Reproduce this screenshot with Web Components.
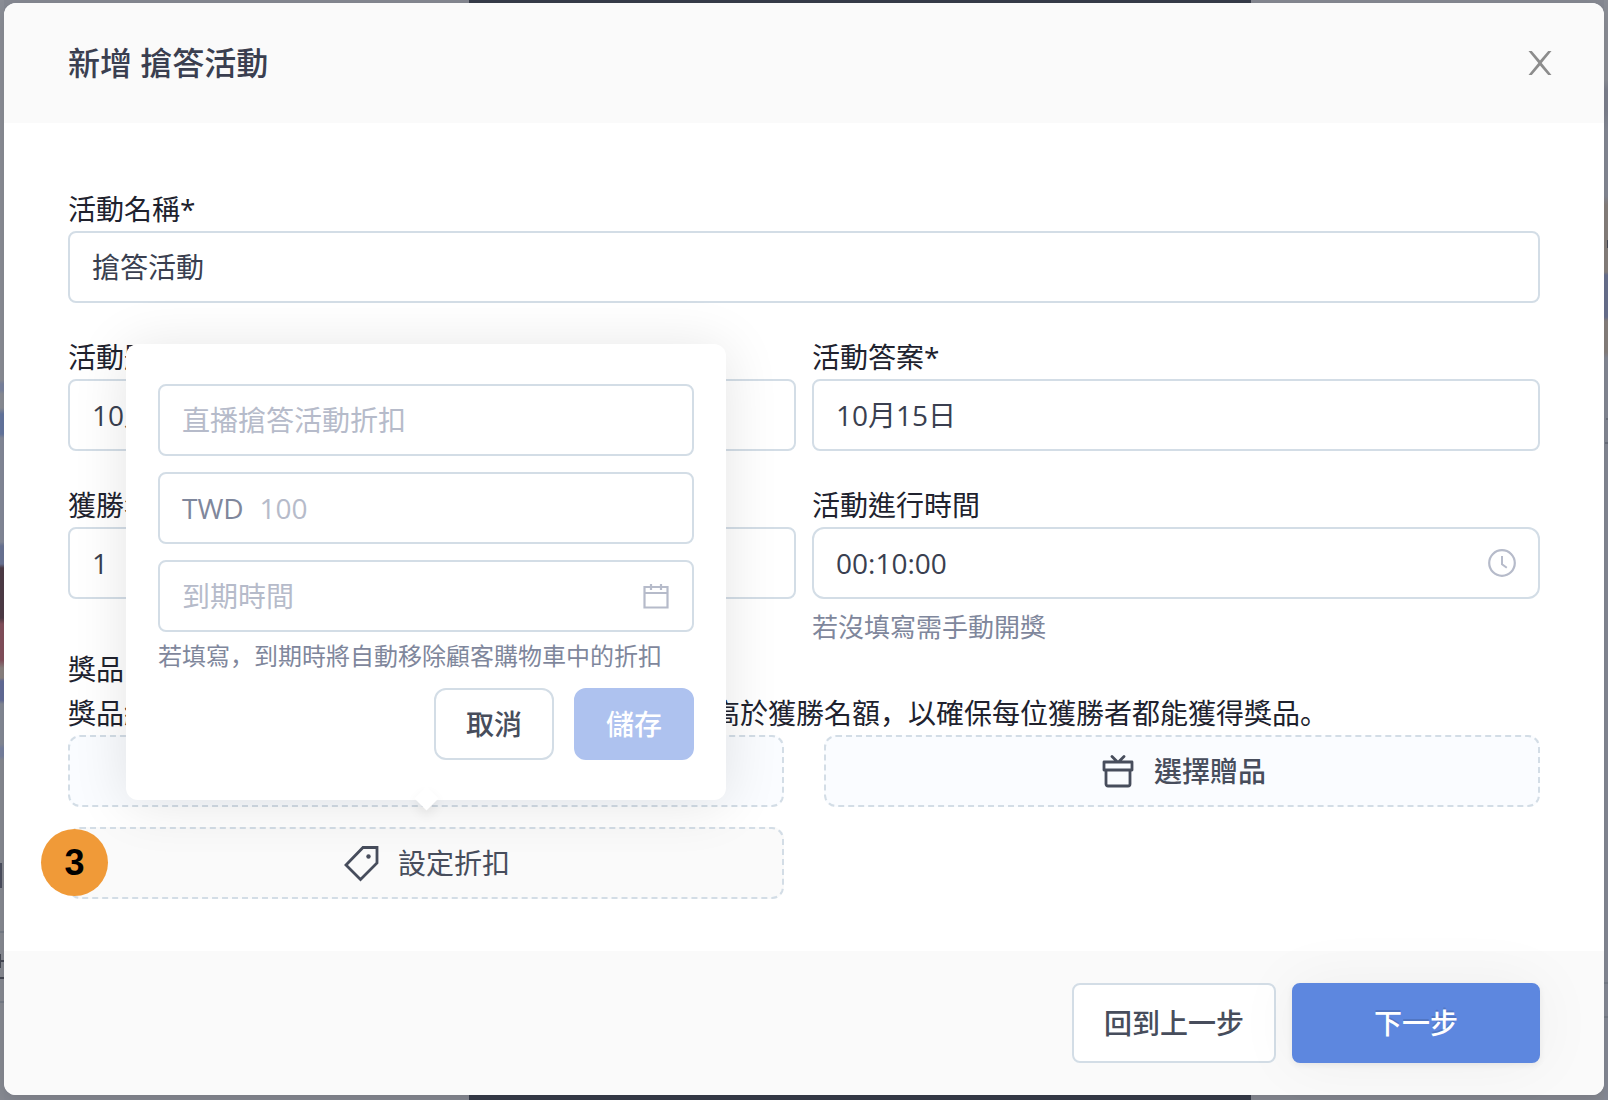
<!DOCTYPE html>
<html lang="zh-Hant">
<head>
<meta charset="utf-8">
<meta name="viewport" content="width=device-width, initial-scale=1">
<title>新增 搶答活動</title>
<style>
  body {
    margin: 0;
    font: 28px/44px "Open Sans", "Noto Sans CJK TC", sans-serif;
    color: #20222e;
    --line: #d3dde6;
    --text: #3a3f50;
    --muted: #7f879c;
    --faint: #b6bbca;
    --primary: #5d87df;
  }
  .comma { font-family: "Noto Sans CJK SC", sans-serif; line-height: 0; }
  .wide { grid-column: 1 / -1; }
</style>
</head>
<body>
<page-backdrop>
  <activity-dialog heading="新增 搶答活動">
    <field-grid>
      <form-field class="wide" label="活動名稱*" value="搶答活動"></form-field>
      <form-field label="活動題目*" value="10月15日"></form-field>
      <form-field label="活動答案*" value="10月15日"></form-field>
      <form-field label="獲勝名額*" value="1"></form-field>
      <form-field label="活動進行時間" value="00:10:00" icon="clock" round hint="若沒填寫需手動開獎"></form-field>
    </field-grid>
    <prize-section>
      <span slot="label">獎品</span>
      <span slot="note">獎品總數量為所有商品、贈品與折扣的合計<span class="comma" lang="zh-Hans">，</span>建議須高於獲勝名額<span class="comma" lang="zh-Hans">，</span>以確保每位獲勝者都能獲得獎品<span class="comma" lang="zh-Hans">。</span></span>
      <dashed-button icon="bag">選擇商品</dashed-button>
      <dashed-button icon="gift">選擇贈品</dashed-button>
      <dashed-button icon="tag" active>設定折扣
        <step-badge slot="badge">3</step-badge>
        <discount-popover slot="popover"><span>若填寫<span class="comma" lang="zh-Hans">，</span>到期時將自動移除顧客購物車中的折扣</span></discount-popover>
      </dashed-button>
    </prize-section>
    <app-button slot="footer" size="large">回到上一步</app-button>
    <app-button slot="footer" size="large" kind="primary">下一步</app-button>
  </activity-dialog>
</page-backdrop>

<script>
const define = (name, render) => customElements.define(name, class extends HTMLElement {
  connectedCallback() {
    if (this.shadowRoot) return;
    const t = document.createElement('template');
    t.innerHTML = '<style>*{box-sizing:border-box}:host{box-sizing:border-box}</style>' + render(this);
    this.attachShadow({ mode: 'open' }).append(t.content.cloneNode(true));
  }
});

const icons = {
  close: [24, '<path d="M.5 0h3.300L12 9.400 20.200 0h3.300L13.700 12 23.500 24h-3.300L12 14.400 3.800 24H.5L10.300 12z" fill="currentColor"/>'],
  clock: [28, '<circle cx="14" cy="14" r="12.800" stroke-width="2.200"/><path d="M14 7v8.200l4.800 3.600" stroke-width="2"/>'],
  calendar: [28, '<path d="M2.500 5h23v20.500h-23zM2.500 11h23M9 2v6M19 2v6" stroke-width="2.200"/>'],
  gift: [36, '<path d="M6 9h28v8H6zM8 17h24v14a2 2 0 0 1-2 2H10a2 2 0 0 1-2-2zM14 3.500l5.500 5.500h1L26 3.500" stroke-width="2.800" stroke-linejoin="round" stroke-linecap="round"/>'],
  tag: [36, '<path d="M21 2.500h14v15.500L18.500 34.500 4 20z" stroke-width="2.800"/><circle cx="26.500" cy="11.500" r="2.200" fill="currentColor" stroke="none"/>'],
  bag: [36, '<path d="M6 11h24v21H6zM12 15V9a6 6 0 0 1 12 0v6" stroke-width="2.800"/>']
};
define('ui-icon', el => {
  const [s, d] = icons[el.getAttribute('name')];
  return `<style>:host{display:block;flex:none}svg{display:block;overflow:visible}</style>
  <svg width="${s}" height="${s}" viewBox="0 0 ${s} ${s}" fill="none" ${el.getAttribute('name') === 'close' ? '' : 'stroke="currentColor"'} aria-hidden="true">${d}</svg>`;
});

define('page-backdrop', () => `
<style>
  :host {
    display: block; min-height: 100vh; padding: 3px 4px 5px;
    background:
      linear-gradient(#4b4f5f, #4b4f5f) 0 863px / 2px 25px,
      linear-gradient(#454854, #454854) 0 960px / 4px 2px,
      linear-gradient(#454854, #454854) 0 977px / 4px 2px,
      linear-gradient(#454854, #454854) 0 954px / 1px 14px,
      linear-gradient(#777d88, #777d88) 0 931px / 4px 2px,
      linear-gradient(#777d88, #777d88) 0 1001px / 4px 2px,
      linear-gradient(#454854, #454854) right 240px / 1px 8px,
      linear-gradient(#6b707c, #6b707c) right 418px / 2px 2px,
      linear-gradient(#6b707c, #6b707c) right 442px / 3px 2px,
      linear-gradient(#777d88, #777d88) right 982px / 4px 2px,
      linear-gradient(#777d88, #777d88) right 1016px / 4px 2px,
      linear-gradient(#8b8e96 380px, #7b84a0 384px 390px, #8b8e96 394px 408px, #6577a0 414px 434px, #858a9a 438px 542px, #6b7596 546px 564px, #4f3c47 568px 618px, #84505c 624px 660px, #8b8280 668px 678px, #636c98 681px 700px, #858a96 704px 744px, #7882a0 748px 756px, #878a92 760px) left / 4px 100%,
      linear-gradient(#8b8e96 80px, #7d818e 90px 110px, #858995 130px 196px, #87807d 205px 272px, #69718f 275px 317px, #87807d 321px 352px, #858995 358px) right / 4px 100%,
      linear-gradient(90deg, transparent 29.180%, #373c4a 29.180% 77.800%, transparent 77.800%),
      #868992;
    background-repeat: no-repeat;
  }
</style><slot></slot>`);

define('activity-dialog', el => `
<style>
  :host { display: flex; flex-direction: column; background: #fff; border-radius: 12px; box-shadow: 0 4px 16px rgba(0,0,0,.12); }
  header { display: flex; align-items: center; justify-content: space-between; padding: 36px 40px 36px 64px; background: #fafafa; border-radius: 12px 12px 0 0; }
  h1 { margin: 0; font-size: 32px; line-height: 48px; font-weight: 500; color: #3a3f50; }
  header button { display: grid; place-items: center; width: 48px; height: 48px; padding: 0; border: 0; background: none; color: #8c8c8c; }
  main { padding: 64px 64px 52px; }
  footer { display: flex; justify-content: flex-end; gap: 16px; padding: 32px 64px; background: #fafafa; border-radius: 0 0 12px 12px; }
</style>
<header><h1>${el.getAttribute('heading')}</h1><button type="button" aria-label="關閉"><ui-icon name="close"></ui-icon></button></header>
<main><slot></slot></main>
<footer><slot name="footer"></slot></footer>`);

define('field-grid', () => `
<style>:host { display: grid; grid-template-columns: 1fr 1fr; gap: 32px 16px; }</style><slot></slot>`);

define('form-field', el => {
  const a = n => el.getAttribute(n) || '';
  return `
<style>
  :host { display: block; min-width: 0; }
  label { display: block; }
  .box { display: flex; align-items: center; gap: 16px; height: 72px; padding: 0 22px; border: 2px solid var(--line); border-radius: ${el.hasAttribute('round') ? 12 : 8}px; background: #fff; }
  input { flex: 1; min-width: 0; height: 44px; padding: 0; border: 0; outline: 0; background: none; font: inherit; color: var(--text); }
  input::placeholder { color: var(--faint); opacity: 1; }
  .prefix { color: var(--muted); }
  ui-icon { color: var(--faint); }
  p { margin: 8px 0 0; font-size: 26px; line-height: 40px; color: var(--muted); }
</style>
${a('label') ? `<label for="f">${a('label')}</label>` : ''}
<div class="box">
  ${a('prefix') ? `<span class="prefix">${a('prefix')}</span>` : ''}
  <input id="f" type="text" value="${a('value')}" placeholder="${a('placeholder')}" ${a('label') ? '' : `aria-label="${a('placeholder')}"`}>
  ${a('icon') ? `<ui-icon name="${a('icon')}"></ui-icon>` : ''}
</div>
${a('hint') ? `<p>${a('hint')}</p>` : ''}`;
});

define('prize-section', () => `
<style>
  :host { display: block; }
  .row { display: block; }
  .choices { display: grid; grid-template-columns: 1fr 1fr; gap: 20px 40px; }
</style>
<div class="row"><slot name="label"></slot></div>
<div class="row"><slot name="note"></slot></div>
<div class="choices"><slot></slot></div>`);

define('dashed-button', el => `
<style>
  :host { display: block; position: relative; }
  button { display: flex; align-items: center; justify-content: center; gap: 20px; width: 100%; height: 72px; padding: 0; border: 2px dashed var(--line); border-radius: 12px; background: ${el.hasAttribute('active') ? '#fafafa' : '#fafcff'}; color: #474d5c; font: inherit; font-weight: ${el.hasAttribute('active') ? 400 : 500}; }
</style>
<button type="button"><ui-icon name="${el.getAttribute('icon')}"></ui-icon><span><slot></slot></span></button>
<slot name="badge"></slot><slot name="popover"></slot>`);

define('step-badge', () => `
<style>
  :host { position: absolute; left: -27px; top: 2px; display: grid; place-items: center; width: 67px; height: 67px; border-radius: 50%; background: #f09a38; color: #000; font: bold 36px/44px "Liberation Sans", sans-serif; }
</style><slot></slot>`);

define('discount-popover', () => `
<style>
  :host { position: absolute; z-index: 2; left: 50%; bottom: calc(100% + 27px); transform: translateX(-50%); width: 600px; padding: 40px 32px; border-radius: 12px; background: #fff; box-shadow: 0 4px 56px rgba(0,0,0,.11); }
  :host::after { content: ""; position: absolute; left: 50%; bottom: -7px; width: 17px; height: 17px; margin-left: -8px; background: #fff; transform: rotate(45deg); box-shadow: 4px 4px 12px rgba(0,0,0,.07); }
  .fields { display: grid; gap: 16px; }
  p { margin: 4px 0 12px; font-size: 24px; line-height: 40px; color: var(--muted); }
  .actions { display: flex; justify-content: flex-end; gap: 20px; }
</style>
<div class="fields">
  <form-field placeholder="直播搶答活動折扣"></form-field>
  <form-field prefix="TWD" placeholder="100"></form-field>
  <form-field placeholder="到期時間" icon="calendar"></form-field>
</div>
<p><slot></slot></p>
<div class="actions"><app-button>取消</app-button><app-button kind="primary" disabled>儲存</app-button></div>`);

define('app-button', el => {
  const large = el.getAttribute('size') === 'large', primary = el.getAttribute('kind') === 'primary', off = el.hasAttribute('disabled');
  return `
<style>
  :host { display: block; }
  button { display: block; height: 72px; padding: 0 30px; border: 2px solid var(--line); border-radius: 12px; background: #fff; color: #474d5c; font: inherit; font-weight: 500; }
  .large { height: 80px; border-radius: 8px; }
  .primary { border-color: var(--primary); background: var(--primary); color: #fff; }
  .large.primary { min-width: 248px; box-shadow: 0 0 64px rgba(0,0,0,.05), 0 2px 6px rgba(0,0,0,.07); text-shadow: 0 -2px 0 rgba(0,0,0,.12); }
  .primary:disabled { border-color: #aec2ef; background: #aec2ef; }
</style>
<button type="button" class="${large ? 'large' : ''} ${primary ? 'primary' : ''}" ${off ? 'disabled' : ''}><slot></slot></button>`;
});
</script>
</body>
</html>
